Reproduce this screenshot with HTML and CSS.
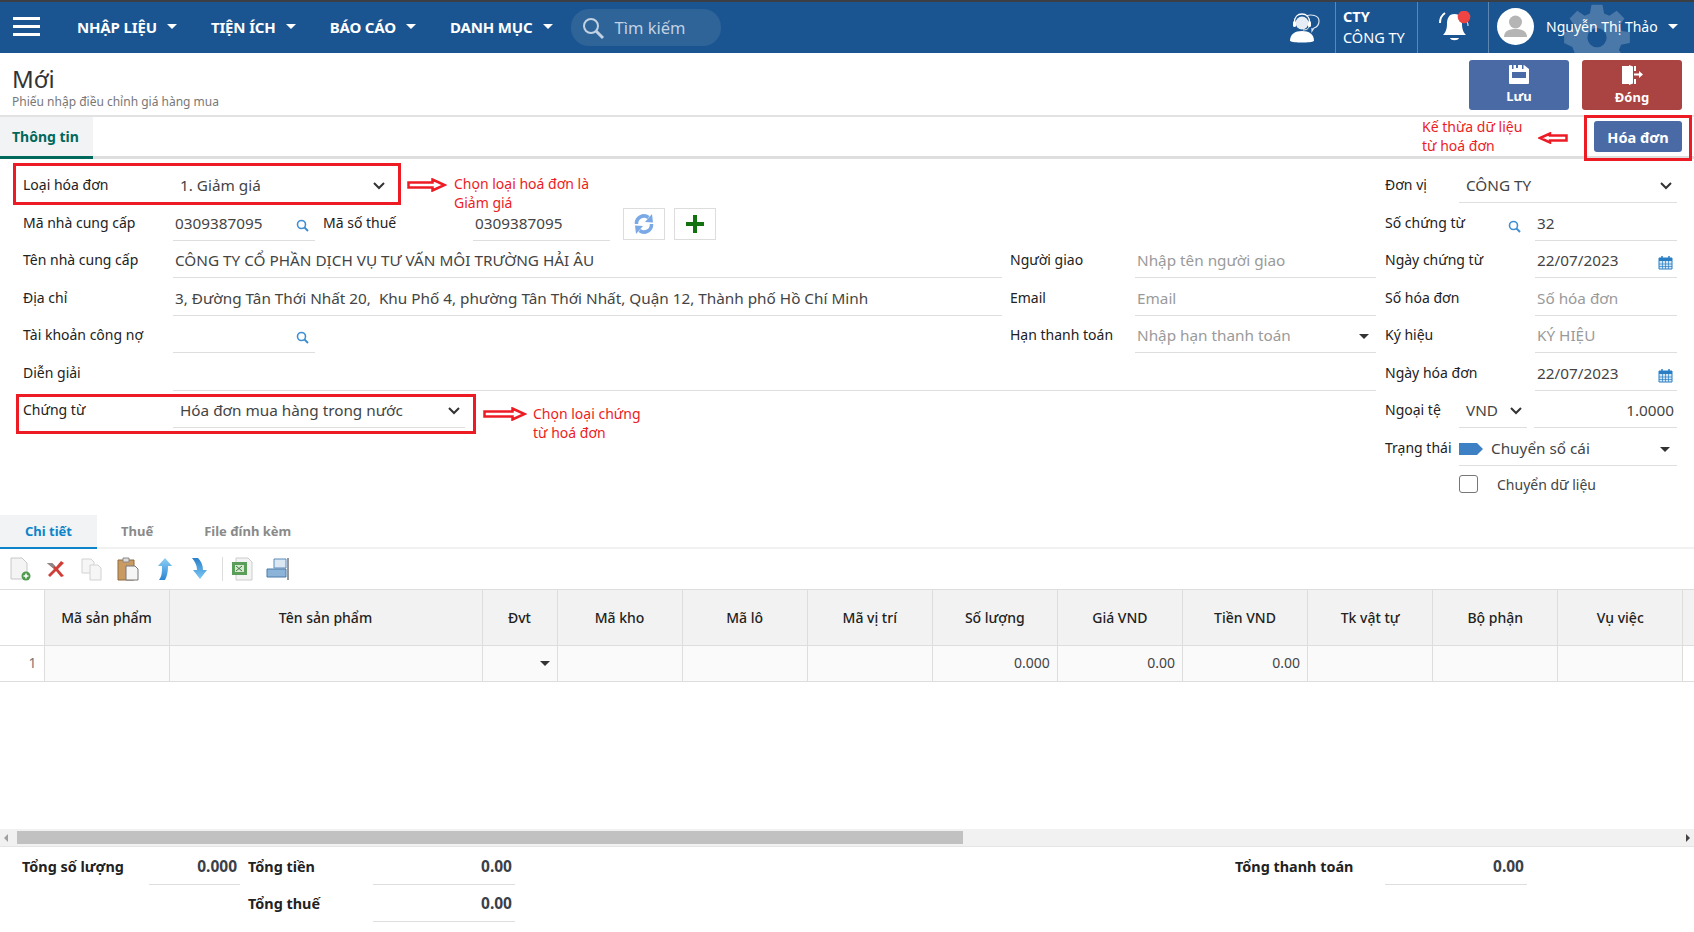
FILE: index.html
```html
<!DOCTYPE html>
<html lang="vi">
<head>
    <meta charset="UTF-8">
    <title>Phiếu nhập điều chỉnh giá hàng mua</title>
    <link rel="stylesheet" href="styles.css">
</head>
<body>
    <div class="topbar">
        <div class="hamburger"><span></span><span></span><span></span></div>
        <div class="menu">
            <a class="menu-item">NHẬP LIỆU<i class="caret"></i></a>
            <a class="menu-item">TIỆN ÍCH<i class="caret"></i></a>
            <a class="menu-item">BÁO CÁO<i class="caret"></i></a>
            <a class="menu-item">DANH MỤC<i class="caret"></i></a>
        </div>
        <div class="search">
            <svg width="24" height="24" viewBox="0 0 24 24" fill="none" stroke="#c3d2e2" stroke-width="2"><circle cx="10" cy="10" r="7"/><path d="M15 15l7 7" stroke-width="3"/></svg>
            <span>Tìm kiếm</span>
        </div>
        <div class="top-right">
            <svg class="gear" width="66" height="74" viewBox="0 0 24 27" fill="#4a78a8"><path d="M10 1h4l.6 3.2 1.900.8L19.200 3.200l2.800 2.800-1.800 2.700.8 1.900L24 11v4l-3.200.6-.8 1.900 1.800 2.700-2.800 2.800-2.700-1.800-1.900.8L14 26h-4l-.6-3.200-1.900-.8-2.700 1.800L2 21l1.800-2.700-.8-1.900L0 15v-4l3-.4.8-1.900L2 6l2.800-2.800 2.700 1.800 1.900-.8zM12 9.500a3.500 3.500 0 1 0 0 7 3.500 3.500 0 0 0 0-7z" fill-rule="evenodd"/></svg>
            <div class="top-icon agent">
                <svg width="30" height="30" viewBox="0 0 30 30"><path d="M16 3c5-2 13-1 13 5 0 4-2 6-5 7l-2 3v-3" fill="none" stroke="#dfe8f1" stroke-width="1.200"/><circle cx="12" cy="10" r="6.500" fill="#e6edf4"/><path d="M4.500 11V9c0-5 3-8 7.500-8s7.500 3 7.500 8v2" fill="none" stroke="#fff" stroke-width="1.300"/><rect x="3" y="8" width="3" height="6" rx="1.500" fill="#fff"/><rect x="18" y="8" width="3" height="6" rx="1.500" fill="#fff"/><path d="M19 13c0 3-3 4-6 4" fill="none" stroke="#fff"/><path d="M0 28c0-7 5-10 12-10s12 3 12 10c-3 2-21 2-24 0z" fill="#fff"/></svg>
            </div>
            <div class="company"><b>CTY</b><span>CÔNG TY</span></div>
            <div class="top-icon bell">
                <svg width="34" height="33" viewBox="0 0 34 33"><path d="M16.500 3c6 0 7.500 5 7.500 10 0 6 2 9 4 11H5c2-2 4-5 4-11 0-5 1.500-10 7.500-10z" fill="#fff"/><path d="M12 27h9c-1 3-8 3-9 0z" fill="#fff"/><path d="M7 2C4 4 2 8 2 12" fill="none" stroke="#fff" stroke-width="2"/><path d="M29 11c1 1 1 3 1 4" fill="none" stroke="#fff"/><circle cx="26" cy="6" r="6.300" fill="#ef4444"/></svg>
            </div>
            <div class="user">
                <div class="avatar"><svg width="37" height="37" viewBox="0 0 37 37"><circle cx="18.500" cy="14" r="6.500" fill="#b5b5b5"/><path d="M7 29c0-6 5-8 11.500-8S30 23 30 29z" fill="#b5b5b5"/></svg></div>
                <span>Nguyễn Thị Thảo</span><i class="caret"></i>
            </div>
        </div>
    </div>

    <div class="page-head">
        <div>
            <h1>Mới</h1>
            <p>Phiếu nhập điều chỉnh giá hàng mua</p>
        </div>
        <div class="head-actions">
            <button class="action save">
                <svg width="20" height="19" viewBox="0 0 20 19"><path d="M1 0h14l5 4v14a1 1 0 0 1-1 1H1a1 1 0 0 1-1-1V1a1 1 0 0 1 1-1z" fill="#fff"/><path d="M3 0h1.500v4H3zM13 0h1.500v4H13z" fill="#4a6aa5"/><path d="M7 0h2v3H7z" fill="#4a6aa5"/><path d="M3 7h14v6H3z" fill="#4a6aa5"/></svg>
                Lưu
            </button>
            <button class="action close">
                <svg width="21" height="20" viewBox="0 0 21 20"><path d="M0 1h7v18H0zM7 0l4 1.500v17L7 20z" fill="#fff"/><path d="M12 1h2v5h-2zM12 14h2v5h-2z" fill="#fff"/><path d="M12 8.500h5V6l4 3.500-4 3.500v-2.500h-5z" fill="#fff"/></svg>
                Đóng
            </button>
        </div>
    </div>

    <div class="tabbar">
        <div class="tab-main">Thông tin</div>
        <button class="btn-invoice">Hóa đơn</button>
    </div>

    <div class="form">
        <div class="form-main">
            <div class="row">
                <label class="lbl w150">Loại hóa đơn</label>
                <div class="field plain w217 indent">1. Giảm giá<svg class="chev" width="12" height="8" viewBox="0 0 12 8"><path d="M1 1l5 5 5-5" fill="none" stroke="#333" stroke-width="2"/></svg></div>
            </div>
            <div class="row">
                <label class="lbl w150">Mã nhà cung cấp</label>
                <div class="field w142">0309387095<svg class="mag" width="13" height="13" viewBox="0 0 13 13" fill="none" stroke="#3f8fd2" stroke-width="1.600"><circle cx="5.500" cy="5.500" r="4"/><path d="M8.500 8.500l3.500 3.500" stroke-width="2"/></svg></div>
                <label class="lbl tax">Mã số thuế</label>
                <div class="field w137">0309387095</div>
                <button class="icon-btn refresh">
                    <svg width="22" height="22" viewBox="0 0 22 22" fill="#7aa9e6"><path d="M3.500 11A7.500 7.500 0 0 1 15.500 4.500" fill="none" stroke="#7aa9e6" stroke-width="3.500"/><path d="M12 9l8 .5-1-8.500z"/><path d="M18.500 11A7.500 7.500 0 0 1 6.500 17.500" fill="none" stroke="#7aa9e6" stroke-width="3.500"/><path d="M10 13l-8-.5 1 8.500z"/></svg>
                </button>
                <button class="icon-btn">
                    <svg width="18" height="18" viewBox="0 0 18 18"><path d="M7 0h4v7h7v4h-7v7H7v-7H0V7h7z" fill="#12720f"/></svg>
                </button>
            </div>
            <div class="row">
                <label class="lbl w150">Tên nhà cung cấp</label>
                <div class="field w829">CÔNG TY CỔ PHẦN DỊCH VỤ TƯ VẤN MÔI TRƯỜNG HẢI ÂU</div>
                <label class="lbl side-lbl">Người giao</label>
                <div class="field w241 ph">Nhập tên người giao</div>
            </div>
            <div class="row">
                <label class="lbl w150">Địa chỉ</label>
                <div class="field w829">3, Đường Tân Thới Nhất 20,&nbsp; Khu Phố 4, phường Tân Thới Nhất, Quận 12, Thành phố Hồ Chí Minh</div>
                <label class="lbl side-lbl">Email</label>
                <div class="field w241 ph">Email</div>
            </div>
            <div class="row">
                <label class="lbl w150">Tài khoản công nợ</label>
                <div class="field w142"><svg class="mag" width="13" height="13" viewBox="0 0 13 13" fill="none" stroke="#3f8fd2" stroke-width="1.600"><circle cx="5.500" cy="5.500" r="4"/><path d="M8.500 8.500l3.500 3.500" stroke-width="2"/></svg></div>
                <div class="spacer"></div>
                <label class="lbl side-lbl">Hạn thanh toán</label>
                <div class="field w241 ph">Nhập hạn thanh toán<i class="tri"></i></div>
            </div>
            <div class="row">
                <label class="lbl w150">Diễn giải</label>
                <div class="field w1203"></div>
            </div>
            <div class="row">
                <label class="lbl w150">Chứng từ</label>
                <div class="field w292 indent">Hóa đơn mua hàng trong nước<svg class="chev" width="12" height="8" viewBox="0 0 12 8"><path d="M1 1l5 5 5-5" fill="none" stroke="#333" stroke-width="2"/></svg></div>
            </div>
        </div>
        <div class="form-side">
            <div class="row">
                <label class="lbl w74">Đơn vị</label>
                <div class="field w218 indent">CÔNG TY<svg class="chev" width="12" height="8" viewBox="0 0 12 8"><path d="M1 1l5 5 5-5" fill="none" stroke="#333" stroke-width="2"/></svg></div>
            </div>
            <div class="row">
                <label class="lbl w150 has-mag">Số chứng từ<svg class="mag-lbl" width="13" height="13" viewBox="0 0 13 13" fill="none" stroke="#3f8fd2" stroke-width="1.600"><circle cx="5.500" cy="5.500" r="4"/><path d="M8.500 8.500l3.500 3.500" stroke-width="2"/></svg></label>
                <div class="field w142">32</div>
            </div>
            <div class="row">
                <label class="lbl w150">Ngày chứng từ</label>
                <div class="field w142">22/07/2023<svg class="cal" width="15" height="15" viewBox="0 0 15 15"><path d="M1 3h13v11H1z" fill="#d5e6f5" stroke="#2a7fc4"/><path d="M1 3h13v3H1z" fill="#2a7fc4"/><path d="M4 1v3M11 1v3" stroke="#2a7fc4" stroke-width="1.500"/><path d="M1 9h13M1 11.500h13M4.500 6v8M7.500 6v8M10.500 6v8" stroke="#2a7fc4" stroke-width=".7"/></svg></div>
            </div>
            <div class="row">
                <label class="lbl w150">Số hóa đơn</label>
                <div class="field w142 ph">Số hóa đơn</div>
            </div>
            <div class="row">
                <label class="lbl w150">Ký hiệu</label>
                <div class="field w142 ph">KÝ HIỆU</div>
            </div>
            <div class="row">
                <label class="lbl w150">Ngày hóa đơn</label>
                <div class="field w142">22/07/2023<svg class="cal" width="15" height="15" viewBox="0 0 15 15"><path d="M1 3h13v11H1z" fill="#d5e6f5" stroke="#2a7fc4"/><path d="M1 3h13v3H1z" fill="#2a7fc4"/><path d="M4 1v3M11 1v3" stroke="#2a7fc4" stroke-width="1.500"/><path d="M1 9h13M1 11.500h13M4.500 6v8M7.500 6v8M10.500 6v8" stroke="#2a7fc4" stroke-width=".7"/></svg></div>
            </div>
            <div class="row">
                <label class="lbl w74">Ngoại tệ</label>
                <div class="field w68 indent">VND<svg class="chev" width="12" height="8" viewBox="0 0 12 8"><path d="M1 1l5 5 5-5" fill="none" stroke="#333" stroke-width="2"/></svg></div>
                <div class="field w143 right">1.0000</div>
            </div>
            <div class="row">
                <label class="lbl w74">Trạng thái</label>
                <div class="field w218 status"><svg width="24" height="12" viewBox="0 0 24 12"><path d="M0 0h18l6 6-6 6H0z" fill="#3d80c4"/></svg>Chuyển sổ cái<i class="tri"></i></div>
            </div>
            <div class="row">
                <div class="w74"></div>
                <div class="check"><i class="box"></i>Chuyển dữ liệu</div>
            </div>
        </div>
    </div>

    <div class="subtabs">
        <div class="subtab active">Chi tiết</div>
        <div class="subtab">Thuế</div>
        <div class="subtab">File đính kèm</div>
    </div>

    <div class="toolbar">
        <svg class="tool" width="24" height="24" viewBox="0 0 24 24"><path d="M3 1h11l5 5v16H3z" fill="#f4f4f4" stroke="#c8c8c8"/><circle cx="18" cy="19" r="4.500" fill="#4c9a4c"/><path d="M15.500 19h5M18 16.500v5" stroke="#fff" stroke-width="1.500"/></svg>
        <svg class="tool" width="24" height="24" viewBox="0 0 24 24"><path d="M3 6l5 0 4 4 5-6 3 2-6 6 6 7-3 1-5-6-6 6-2-2 6-6z" fill="#cf3f3a"/><path d="M3 6l5 0 3 3-2 2z" fill="#8a8a8a"/></svg>
        <svg class="tool" width="24" height="24" viewBox="0 0 24 24" fill="#f6f6f6" stroke="#d2d2d2"><path d="M2 2h9l3 3v11H2z"/><path d="M10 8h8l3 3v12H10z"/></svg>
        <svg class="tool" width="24" height="24" viewBox="0 0 24 24"><path d="M2 3h16v20H2z" fill="#c99a62" stroke="#8f6a3a"/><path d="M7 1h6v4H7z" fill="#ddd" stroke="#888"/><path d="M10 9h9l3 3v11H10z" fill="#f5f5f5" stroke="#777"/></svg>
        <svg class="tool" width="24" height="24" viewBox="0 0 24 24"><defs><linearGradient id="up" x1="0" y1="0" x2="0" y2="1"><stop offset="0" stop-color="#8fd0f5"/><stop offset="1" stop-color="#2a86d2"/></linearGradient></defs><path d="M13 1l7 8h-4c0 6-1 10-3 14H7c3-4 3-8 3-14H6z" fill="url(#up)"/></svg>
        <svg class="tool" width="24" height="24" viewBox="0 0 24 24"><defs><linearGradient id="down" x1="0" y1="0" x2="0" y2="1"><stop offset="0" stop-color="#2a7fc8"/><stop offset="1" stop-color="#7cc8f5"/></linearGradient></defs><path d="M4 1h6c3 3 5 7 5 12h4l-7 9-7-9h4c0-5-2-8-5-12z" fill="url(#down)"/></svg>
        <i class="tool-sep"></i>
        <svg class="tool" width="24" height="24" viewBox="0 0 24 24"><path d="M6 1h12l4 4v18H6z" fill="#f4f4f4" stroke="#ccc"/><path d="M2 5h15v13H2z" fill="#5a9e5a"/><path d="M5 8h9v7H5z" fill="#d6e8d0"/><path d="M6 9l6 5M12 9l-6 5" stroke="#3a7a3a"/></svg>
        <svg class="tool" width="24" height="24" viewBox="0 0 24 24"><path d="M8 2h12v9H8z" fill="#dbe8f4" stroke="#5a8ab8"/><path d="M1 12h19v8H1z" fill="#8cb4d8" stroke="#4a7aa8"/><path d="M22 1v22" stroke="#333"/></svg>
    </div>

    <div class="grid-wrap">
        <table class="grid">
            <thead>
                <tr>
                    <th class="c-no"></th>
                    <th class="c-code">Mã sản phẩm</th>
                    <th class="c-name">Tên sản phẩm</th>
                    <th class="c-unit">Đvt</th>
                    <th>Mã kho</th>
                    <th>Mã lô</th>
                    <th>Mã vị trí</th>
                    <th>Số lượng</th>
                    <th>Giá VND</th>
                    <th>Tiền VND</th>
                    <th>Tk vật tự</th>
                    <th>Bộ phận</th>
                    <th>Vụ việc</th>
                    <th class="c-rest"></th>
                </tr>
            </thead>
            <tbody>
                <tr>
                    <td class="no">1</td>
                    <td></td>
                    <td></td>
                    <td class="has-tri"><i class="tri"></i></td>
                    <td></td>
                    <td></td>
                    <td></td>
                    <td class="num">0.000</td>
                    <td class="num">0.00</td>
                    <td class="num">0.00</td>
                    <td></td>
                    <td></td>
                    <td></td>
                    <td class="rest"></td>
                </tr>
            </tbody>
        </table>
    </div>

    <div class="hscroll">
        <i class="arrow-l"></i>
        <div class="thumb"></div>
        <i class="arrow-r"></i>
    </div>

    <div class="totals">
        <div class="total-col col-qty">
            <div class="total"><span class="t-label w127">Tổng số lượng</span><span class="t-val w91">0.000</span></div>
        </div>
        <div class="total-col col-money">
            <div class="total"><span class="t-label w125">Tổng tiền</span><span class="t-val w142">0.00</span></div>
            <div class="total"><span class="t-label w125">Tổng thuế</span><span class="t-val w142">0.00</span></div>
        </div>
        <div class="total-col">
            <div class="total"><span class="t-label w150">Tổng thanh toán</span><span class="t-val w142">0.00</span></div>
        </div>
    </div>

    <!-- chu thich do ve de len man hinh -->
    <div class="mark m1"></div>
    <div class="mark m2"></div>
    <div class="mark m3"></div>

    <svg class="arrow a1" width="40" height="14" viewBox="0 0 40 14"><path d="M1.500 4.500h24V1.500l12 5.500-12 5.500v-3h-24z" fill="#fff" stroke="#ed1c24" stroke-width="2.500"/></svg>
    <svg class="arrow a2" width="44" height="14" viewBox="0 0 44 14"><path d="M1.500 4.500h28V1.500l12 5.500-12 5.500v-3h-28z" fill="#fff" stroke="#ed1c24" stroke-width="2.500"/></svg>
    <svg class="arrow a3" width="30" height="12" viewBox="0 0 30 12"><path d="M28.500 3.500H12V1.500L2 6l10 4.500V8.500h16.500z" fill="#fff" stroke="#ed1c24" stroke-width="2.500"/></svg>

    <div class="note n1">Chọn loại hoá đơn là<br>Giảm giá</div>
    <div class="note n2">Chọn loại chứng<br>từ hoá đơn</div>
    <div class="note n3">Kế thừa dữ liệu<br>từ hoá đơn</div>
</body>
</html>
```

FILE: styles.css
```css
* {
    box-sizing: border-box;
}
html, body {
    margin: 0;
    height: 932px;
    overflow: hidden;
}
body {
    position: relative;
    font-family: "Noto Sans", "Open Sans", sans-serif;
    font-size: 14px;
    color: #222;
    background-color: #fff;
}

/* top bar */
.topbar {
    display: flex;
    align-items: center;
    height: 53px;
    border-top: 2px solid #3b3f44;
    background-color: #1a5592;
    color: #fff;
}
.hamburger {
    width: 27px;
    margin: -2px 37px 0 13px;
}
.hamburger span {
    display: block;
    height: 3px;
    margin: 5px 0;
    background-color: #fff;
}
.menu {
    display: flex;
    gap: 34px;
    margin-top: -2px;
}
.menu-item {
    display: flex;
    align-items: center;
    font-size: 15px;
    font-weight: 700;
    letter-spacing: -0.15px;
    white-space: nowrap;
}
.caret {
    display: inline-block;
    width: 0;
    height: 0;
    margin-left: 10px;
    border-left: 5px solid transparent;
    border-right: 5px solid transparent;
    border-top: 5px solid #fff;
}
.search {
    display: flex;
    align-items: center;
    gap: 10px;
    width: 150px;
    height: 37px;
    margin-left: 18px;
    padding-left: 10px;
    border-radius: 18px;
    background-color: #2f6499;
    font-size: 16.500px;
    color: #c3d2e2;
}
.top-right {
    position: relative;
    display: flex;
    align-items: stretch;
    height: 51px;
    margin-left: auto;
    overflow: hidden;
}
.gear {
    position: absolute;
    right: 64px;
    top: 0;
}
.top-icon {
    position: relative;
    display: flex;
    align-items: center;
    justify-content: center;
}
.agent {
    width: 55px;
    padding: 0 5px 0 0;
}
.company {
    position: relative;
    width: 82px;
    padding: 4px 0 0 7px;
    border-left: 1px solid #5d86b2;
    font-size: 14.500px;
    line-height: 21px;
}
.company b, .company span {
    display: block;
}
.bell {
    width: 71px;
    padding-left: 4px;
    border-left: 1px solid #5d86b2;
}
.user {
    position: relative;
    display: flex;
    align-items: center;
    width: 206px;
    padding: 0 0 2px 8px;
    border-left: 1px solid #5d86b2;
}
.avatar {
    width: 37px;
    height: 37px;
    margin-right: 12px;
    border-radius: 50%;
    background-color: #fff;
}

/* title */
.page-head {
    display: flex;
    justify-content: space-between;
    height: 64px;
    padding: 7px 12px 0;
    border-bottom: 2px solid #e2e2e2;
}
.page-head h1 {
    margin: 4px 0 0;
    font-size: 24px;
    font-weight: 400;
    line-height: 30px;
    color: #333;
}
.page-head p {
    margin: 0;
    font-size: 12px;
    line-height: 16px;
    color: #777;
}
.head-actions {
    display: flex;
    gap: 13px;
}
.action {
    display: flex;
    flex-direction: column;
    align-items: center;
    width: 100px;
    height: 50px;
    padding-top: 5px;
    border: none;
    border-radius: 3px;
    font-family: inherit;
    font-size: 13px;
    font-weight: 700;
    line-height: 24px;
    color: #fff;
}
.save {
    background-color: #4a6aa5;
}
.close {
    background-color: #a94442;
}

/* tab */
.tabbar {
    display: flex;
    justify-content: space-between;
    height: 42px;
    padding-right: 12px;
    border-bottom: 3px solid #dedede;
}
.tab-main {
    width: 93px;
    height: 42px;
    padding-left: 12px;
    border-bottom: 3px solid #00695c;
    background-color: #f1f3f5;
    font-weight: 700;
    line-height: 39px;
    color: #00695c;
}
.btn-invoice {
    width: 88px;
    height: 31px;
    margin-top: 4px;
    border: none;
    border-radius: 3px;
    background-color: #4a6aa5;
    font-family: inherit;
    font-size: 14.500px;
    font-weight: 700;
    color: #fff;
}

/* form */
.form {
    display: flex;
    height: 356px;
    padding-top: 7px;
}
.form-main {
    width: 1385px;
    padding-left: 23px;
}
.form-side {
    width: 309px;
}
.row {
    display: flex;
    align-items: flex-start;
    height: 37.500px;
}
.lbl {
    flex: none;
    line-height: 38px;
    white-space: nowrap;
}
.field {
    position: relative;
    flex: none;
    height: 37px;
    padding-left: 2px;
    border-bottom: 1px solid #dedede;
    font-size: 15.300px;
    line-height: 39px;
    white-space: nowrap;
    color: #444;
}
.plain {
    border-bottom: none;
}
.indent {
    padding-left: 7px;
}
.ph {
    color: #9a9a9a;
}
.right {
    padding-right: 3px;
    text-align: right;
}
.w68 { width: 68px; margin-right: 7px; }
.w74 { width: 74px; }
.w137 { width: 137px; }
.w142 { width: 142px; }
.w143 { width: 143px; }
.w150 { width: 150px; }
.w217 { width: 217px; }
.w218 { width: 218px; }
.w241 { width: 241px; }
.w292 { width: 292px; }
.w829 { width: 829px; }
.w1203 { width: 1203px; }
.tax {
    width: 150px;
    margin-left: 8px;
}
.side-lbl {
    width: 125px;
    margin-left: 8px;
}
.spacer {
    width: 687px;
    flex: none;
}
.chev {
    position: absolute;
    right: 5px;
    top: 16px;
}
.mag {
    position: absolute;
    right: 6px;
    top: 15px;
}
.has-mag {
    position: relative;
}
.mag-lbl {
    position: absolute;
    right: 14px;
    top: 16px;
}
.cal {
    position: absolute;
    right: 4px;
    top: 14px;
}
.tri {
    position: absolute;
    right: 7px;
    top: 18px;
    width: 0;
    height: 0;
    border-left: 5px solid transparent;
    border-right: 5px solid transparent;
    border-top: 5px solid #333;
}
.icon-btn {
    display: flex;
    align-items: center;
    justify-content: center;
    width: 42px;
    height: 32px;
    margin: 4px 0 0 9px;
    padding: 0;
    border: 1px solid #ddd;
    background-color: #fff;
}
.refresh {
    margin-left: 13px;
}
.status {
    padding-left: 0;
}
.status svg {
    margin-right: 8px;
    vertical-align: -1px;
}
.check {
    display: flex;
    align-items: center;
    height: 36px;
    color: #444;
}
.box {
    width: 19px;
    height: 18px;
    margin-right: 19px;
    border: 1px solid #777;
    border-radius: 3px;
}

/* tabs below the form */
.subtabs {
    display: flex;
    height: 34px;
    border-bottom: 2px solid #f1f1f1;
}
.subtab {
    padding: 0 24px;
    font-size: 13px;
    font-weight: 700;
    line-height: 32px;
    color: #8a8a8a;
}
.subtab:last-child {
    margin-left: 3px;
}
.subtab.active {
    width: 97px;
    height: 34px;
    padding: 0;
    border-bottom: 2px solid #0b84c9;
    background-color: #f1f3f5;
    text-align: center;
    color: #0b84c9;
}
.toolbar {
    display: flex;
    align-items: center;
    gap: 12px;
    height: 40px;
    padding-left: 8px;
}
.tool {
    flex: none;
}
.tool-sep {
    width: 1px;
    height: 24px;
    margin: 0 -5px 0 -2px;
    background-color: #ddd;
}

/* table */
.grid-wrap {
    height: 240px;
    border-top: 1px solid #ddd;
}
.grid {
    width: 1694px;
    table-layout: fixed;
    border-collapse: collapse;
}
.grid th {
    width: 125.100px;
    height: 55px;
    border-right: 1px solid #ddd;
    border-bottom: 1px solid #ddd;
    background-color: #f2f2f2;
    font-weight: 500;
    color: #222;
}
.grid th.c-no {
    width: 44px;
    background-color: #fff;
}
.grid th.c-code { width: 125px; }
.grid th.c-name { width: 313px; }
.grid th.c-unit { width: 75px; }
.grid th.c-rest {
    width: 11.100px;
    border-right: none;
}
.grid td {
    height: 36px;
    padding: 0 7px 2px;
    border-right: 1px solid #ddd;
    border-bottom: 1px solid #ddd;
    background-color: #fafafa;
    color: #444;
}
.grid td.no {
    background-color: #fff;
    text-align: right;
    color: #777;
}
.grid td.num {
    text-align: right;
}
.grid td.rest {
    border-right: none;
    background-color: #fff;
}
.has-tri {
    position: relative;
}
.has-tri .tri {
    top: 15px;
}

/* horizontal scrollbar */
.hscroll {
    display: flex;
    align-items: center;
    height: 18px;
    padding: 2px 0;
    background-color: #f1f1f1;
    border-bottom: 1px solid #e5e5e5;
}
.thumb {
    width: 946px;
    height: 13px;
    margin-left: 9px;
    background-color: #c1c1c1;
}
.arrow-l, .arrow-r {
    width: 0;
    height: 0;
    border-top: 4px solid transparent;
    border-bottom: 4px solid transparent;
}
.arrow-l {
    margin-left: 4px;
    border-right: 4px solid #a0a0a0;
}
.arrow-r {
    margin-left: auto;
    margin-right: 4px;
    border-left: 4px solid #444;
}

/* totals */
.totals {
    display: flex;
    padding-top: 1px;
    font-size: 14.400px;
    font-weight: 700;
    color: #222;
}
.col-qty { padding-left: 22px; width: 248px; }
.col-money { width: 987px; }
.total {
    display: flex;
    height: 37px;
    line-height: 37px;
}
.t-label { flex: none; }
.w127 { width: 127px; }
.w125 { width: 125px; }
.t-val {
    flex: none;
    padding-right: 3px;
    border-bottom: 1px solid #dedede;
    font-size: 15.500px;
    text-align: right;
    color: #3a3f48;
}
.w91 { width: 91px; }

/* red annotations */
.mark {
    position: absolute;
    border: 3px solid #ed1c24;
}
.m1 { left: 13px; top: 163px; width: 388px; height: 42px; }
.m2 { left: 16px; top: 394px; width: 460px; height: 40px; }
.m3 { left: 1584px; top: 115px; width: 108px; height: 46px; }
.arrow {
    position: absolute;
}
.a1 { left: 407px; top: 178px; }
.a2 { left: 483px; top: 407px; }
.a3 { left: 1538px; top: 132px; }
.note {
    position: absolute;
    font-size: 14px;
    line-height: 19px;
    color: #ed1c24;
    white-space: nowrap;
}
.n1 { left: 454px; top: 174px; }
.n2 { left: 533px; top: 404px; }
.n3 { left: 1422px; top: 117px; }
```
